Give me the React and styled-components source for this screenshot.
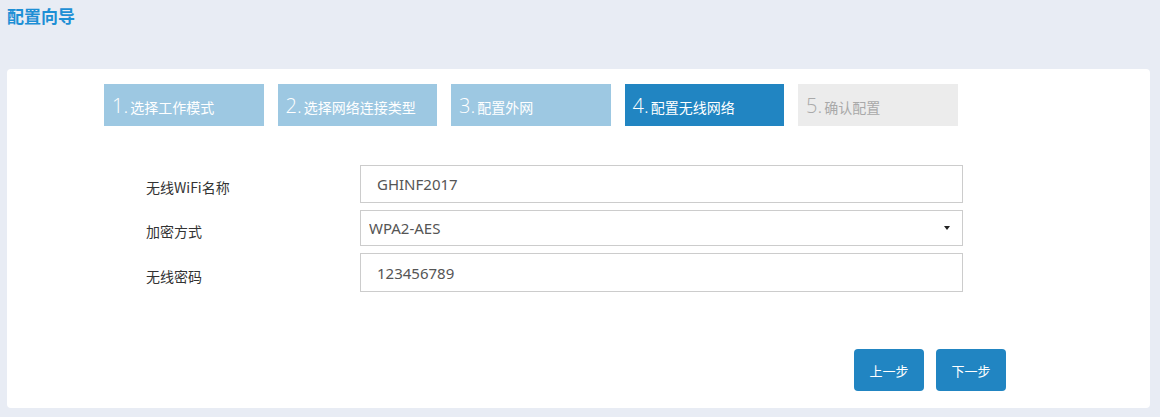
import React from "react";
import styled, { createGlobalStyle } from "styled-components";

const GlobalStyle = createGlobalStyle`
  html, body {
    margin: 0;
    padding: 0;
    background: #e8ecf4;
    font-family: "Noto Sans CJK SC", "Noto Sans", sans-serif;
  }
`;

const steps = [
  { num: "1.", label: "选择工作模式", state: "done" },
  { num: "2.", label: "选择网络连接类型", state: "done" },
  { num: "3.", label: "配置外网", state: "done" },
  { num: "4.", label: "配置无线网络", state: "active" },
  { num: "5.", label: "确认配置", state: "todo" },
];

const stepBg = { done: "#9dc8e2", active: "#2185c2", todo: "#ececec" };
const stepColor = { done: "#ffffff", active: "#ffffff", todo: "#a9a9a9" };

const Page = styled.div`
  height: 417px;
  display: flex;
  flex-direction: column;
  box-sizing: border-box;
  padding: 0 10px 9px 7px;
`;

const Title = styled.h1`
  margin: 0;
  height: 69px;
  padding-top: 4px;
  box-sizing: border-box;
  font-size: 17px;
  line-height: 24px;
  font-weight: 700;
  color: #1d8fd5;
`;

const Panel = styled.div`
  flex: 1;
  background: #ffffff;
  border-radius: 4px;
  padding: 15px 0 17px 97px;
  display: flex;
  flex-direction: column;
`;

const StepBar = styled.div`
  display: flex;
  gap: 14px;
`;

const Step = styled.div`
  width: 159.5px;
  height: 42px;
  box-sizing: border-box;
  padding: 0 8px;
  line-height: 42px;
  white-space: nowrap;
  overflow: hidden;
  background: ${(p) => stepBg[p.$state]};
  color: ${(p) => stepColor[p.$state]};
`;

const StepNum = styled.span`
  font-family: "Open Sans", "Noto Sans", sans-serif;
  font-size: 20px;
  font-weight: 300;
  position: relative;
  top: 1px;
`;

const StepLabel = styled.span`
  font-size: 14px;
  margin-left: 2px;
  position: relative;
  top: 1px;
`;

const Form = styled.div`
  margin: 39px 0 0 42px;
  display: grid;
  grid-template-columns: 214px 603px;
  row-gap: 7px;
  align-items: center;
`;

const Label = styled.label`
  font-size: 14px;
  color: #333333;
  padding-top: 6px;
`;

const TextInput = styled.input`
  box-sizing: border-box;
  width: 100%;
  height: ${(p) => p.$h || 38}px;
  border: 1px solid #cccccc;
  outline: none;
  padding: 0 0 0 16px;
  font-family: "Noto Sans", "Noto Sans CJK SC", sans-serif;
  font-size: 15px;
  color: #555555;
  background: #ffffff;
`;

const SelectWrap = styled.div`
  position: relative;
  height: 36px;
`;

const Select = styled.select`
  appearance: none;
  box-sizing: border-box;
  width: 100%;
  height: 36px;
  border: 1px solid #cccccc;
  border-radius: 0;
  outline: none;
  padding: 0 0 0 8px;
  font-family: "Noto Sans", "Noto Sans CJK SC", sans-serif;
  font-size: 15px;
  color: #555555;
  background: #ffffff;
`;

const Caret = styled.span`
  position: absolute;
  right: 13px;
  top: 16px;
  width: 0;
  height: 0;
  border-left: 3px solid transparent;
  border-right: 3px solid transparent;
  border-top: 4px solid #222222;
  pointer-events: none;
`;

const Actions = styled.div`
  margin-top: auto;
  padding-left: 750px;
  display: flex;
  gap: 12px;
`;

const Button = styled.button`
  width: 70px;
  height: 42px;
  border: none;
  border-radius: 4px;
  background: #2185c2;
  color: #ffffff;
  font-family: "Noto Sans CJK SC", sans-serif;
  font-size: 13px;
  cursor: pointer;
`;

export default function App() {
  return (
    <>
      <GlobalStyle />
      <Page>
        <Title>配置向导</Title>
        <Panel>
          <StepBar>
            {steps.map((s) => (
              <Step key={s.num} $state={s.state}>
                <StepNum>{s.num}</StepNum>
                <StepLabel>{s.label}</StepLabel>
              </Step>
            ))}
          </StepBar>
          <Form>
            <Label>无线WiFi名称</Label>
            <TextInput defaultValue="GHINF2017" />
            <Label>加密方式</Label>
            <SelectWrap>
              <Select defaultValue="WPA2-AES">
                <option>WPA2-AES</option>
                <option>WPA-TKIP</option>
                <option>无加密</option>
              </Select>
              <Caret />
            </SelectWrap>
            <Label>无线密码</Label>
            <TextInput $h={39} defaultValue="123456789" />
          </Form>
          <Actions>
            <Button>上一步</Button>
            <Button>下一步</Button>
          </Actions>
        </Panel>
      </Page>
    </>
  );
}
